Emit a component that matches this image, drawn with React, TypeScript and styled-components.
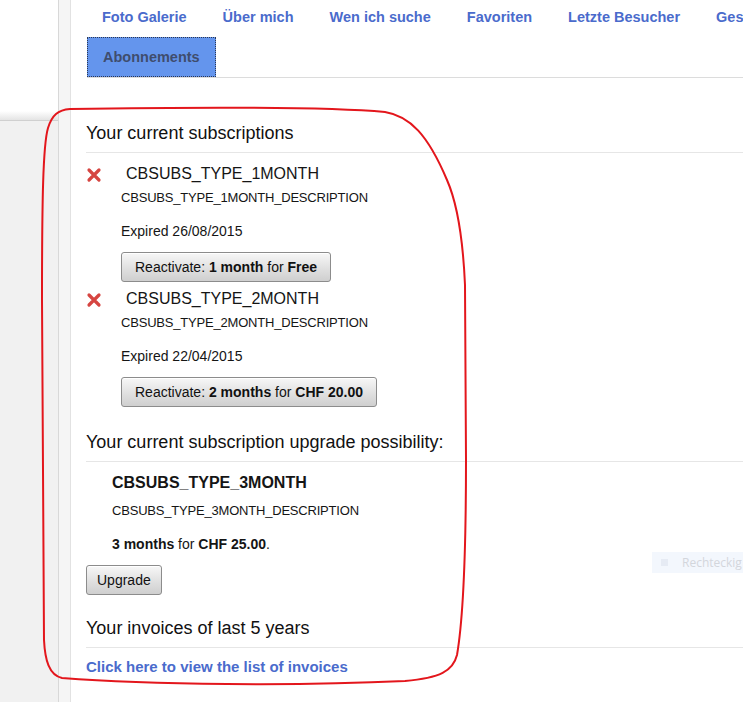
import styled, { createGlobalStyle } from 'styled-components';

const GlobalStyle = createGlobalStyle`
  html, body {
    margin: 0;
    padding: 0;
    overflow: hidden;
    background: #fff;
  }
  body {
    font-family: "Liberation Sans", Arial, sans-serif;
    color: #151515;
  }
`;

const Page = styled.div`
  position: relative;
  display: flex;
  width: 743px;
  height: 702px;
  overflow: hidden;
`;

const Sidebar = styled.aside`
  width: 58px;
  flex-shrink: 0;
  background: #f1f1f1;
`;

const SideTop = styled.div`
  height: 120px;
  background: linear-gradient(#fff 0, #fff calc(100% - 9px), #e4e4e4 100%);
  border-bottom: 1px solid #d0d0d0;
`;

const Gutter = styled.div`
  width: 11px;
  flex-shrink: 0;
  background: #f5f5f5;
  border-left: 1px solid #d8d8d8;
  border-right: 1px solid #e2e2e2;
`;

const Main = styled.main`
  flex: 1;
  min-width: 0;
  padding-left: 15px;
`;

const TabBar = styled.nav`
  display: flex;
  flex-wrap: wrap;
  column-gap: 4px;
  width: 760px;
  margin: -3px 0 0 1px;
  border-bottom: 1px solid #dcdcdc;
`;

const Tab = styled.a<{ $active?: boolean }>`
  box-sizing: border-box;
  height: 40px;
  padding: 0 15px;
  display: flex;
  align-items: center;
  font-size: 14.5px;
  font-weight: bold;
  white-space: nowrap;
  text-decoration: none;
  color: ${(p) => (p.$active ? '#3f4d6d' : '#4a6bcc')};
  background: ${(p) => (p.$active ? '#6495ed' : 'transparent')};
  border: 1px dotted ${(p) => (p.$active ? '#2c3854' : 'transparent')};
  &:first-child {
    margin-left: -1px;
  }
`;

const Section = styled.section<{ $top: number }>`
  margin-top: ${(p) => p.$top}px;
`;

const Heading = styled.h2`
  margin: 0;
  font-size: 18px;
  line-height: 22px;
  font-weight: normal;
  color: #111;
  padding-bottom: 8px;
  border-bottom: 1px solid #e6e6e6;
`;

const Body = styled.div`
  padding-top: 11px;
`;

const SubItem = styled.div`
  display: grid;
  grid-template-columns: 35px 1fr;
  & + & {
    margin-top: 7px;
  }
`;

const IconCell = styled.div`
  display: flex;
  align-items: center;
  height: 20px;
  padding-top: 1px;
`;

const SubTitle = styled.div`
  font-size: 16px;
  line-height: 20px;
  margin-left: 5px;
`;

const Desc = styled.div<{ $gap: number }>`
  margin-top: ${(p) => p.$gap}px;
  font-size: 13px;
  letter-spacing: -0.2px;
  line-height: 16px;
`;

const Line = styled.div`
  margin-top: 17px;
  font-size: 14px;
  line-height: 16px;
`;

const Button = styled.button<{ $gap: number; $pad?: number }>`
  display: block;
  height: 30px;
  margin-top: ${(p) => p.$gap}px;
  padding: 0 ${(p) => p.$pad ?? 13}px;
  font-family: inherit;
  font-size: 14px;
  color: #111;
  background: linear-gradient(#f7f7f7, #e2e2e2 50%, #cfcfcf);
  border: 1px solid #8c8c8c;
  border-radius: 3px;
  box-shadow: inset 0 1px 0 #fff;
`;

const Upgrade = styled.div`
  padding-left: 26px;
`;

const UpgradeTitle = styled.div`
  font-size: 16px;
  line-height: 20px;
  font-weight: bold;
`;

const InvoiceLink = styled.a`
  display: block;
  font-size: 15px;
  line-height: 16px;
  font-weight: bold;
  color: #4a6bcc;
  text-decoration: none;
`;

const Annotation = styled.svg`
  position: absolute;
  left: 0;
  top: 0;
  pointer-events: none;
`;

const Hint = styled.div`
  position: absolute;
  left: 652px;
  top: 552px;
  width: 100px;
  height: 21px;
  display: flex;
  align-items: center;
  gap: 14px;
  padding-left: 9px;
  box-sizing: border-box;
  background: #f3f7fd;
  font-family: "Open Sans", sans-serif;
  font-size: 12px;
  color: #d3d6dc;
`;

const HintDot = styled.span`
  width: 7px;
  height: 7px;
  background: #e6ebf4;
`;

const XIcon = () => (
  <svg width="16" height="16" viewBox="0 0 16 16">
    <path d="M3 3 L13 13 M13 3 L3 13" stroke="#d64541" strokeWidth="3.2" strokeLinecap="round" />
  </svg>
);

const tabs = ['Foto Galerie', 'Über mich', 'Wen ich suche', 'Favoriten', 'Letzte Besucher', 'Geschenke'];

const subs = [
  { name: 'CBSUBS_TYPE_1MONTH', expired: '26/08/2015', period: '1 month', price: 'Free' },
  { name: 'CBSUBS_TYPE_2MONTH', expired: '22/04/2015', period: '2 months', price: 'CHF 20.00' },
];

const App = (): JSX.Element => {
  return (
    <Page>
      <GlobalStyle />
      <Sidebar>
        <SideTop />
      </Sidebar>
      <Gutter />
      <Main>
        <TabBar>
          {tabs.map((t) => (
            <Tab key={t}>{t}</Tab>
          ))}
          <Tab $active>Abonnements</Tab>
        </TabBar>

        <Section $top={44}>
          <Heading>Your current subscriptions</Heading>
          <Body>
            {subs.map((s) => (
              <SubItem key={s.name}>
                <IconCell>
                  <XIcon />
                </IconCell>
                <SubTitle>{s.name}</SubTitle>
                <div />
                <div>
                  <Desc $gap={5}>{s.name}_DESCRIPTION</Desc>
                  <Line>Expired {s.expired}</Line>
                  <Button $gap={13}>
                    Reactivate: <b>{s.period}</b> for <b>{s.price}</b>
                  </Button>
                </div>
              </SubItem>
            ))}
          </Body>
        </Section>

        <Section $top={24}>
          <Heading>Your current subscription upgrade possibility:</Heading>
          <Body>
            <Upgrade>
              <UpgradeTitle>CBSUBS_TYPE_3MONTH</UpgradeTitle>
              <Desc $gap={10}>CBSUBS_TYPE_3MONTH_DESCRIPTION</Desc>
              <Line>
                <b>3 months</b> for <b>CHF 25.00</b>.
              </Line>
            </Upgrade>
            <Button $gap={13} $pad={10}>
              Upgrade
            </Button>
          </Body>
        </Section>

        <Section $top={22}>
          <Heading>Your invoices of last 5 years</Heading>
          <Body>
            <InvoiceLink>Click here to view the list of invoices</InvoiceLink>
          </Body>
        </Section>
      </Main>

      <Hint>
        <HintDot />
        Rechteckig
      </Hint>

      <Annotation width="743" height="702" viewBox="0 0 743 702">
        <path
          d="M70 109 C200 107, 330 107, 385 112 C410 116, 428 135, 447 180 C458 205, 463 240, 465 285 L466 460 C466 560, 463 620, 457 655 C453 671, 440 678, 405 681 C300 686, 150 685, 62 678 C49 675, 45 660, 44 640 L42 300 C42 200, 43 145, 48 128 C52 115, 58 110, 70 109 Z"
          fill="none"
          stroke="#e3161c"
          strokeWidth="2"
        />
      </Annotation>
    </Page>
  );
};

export default App;
